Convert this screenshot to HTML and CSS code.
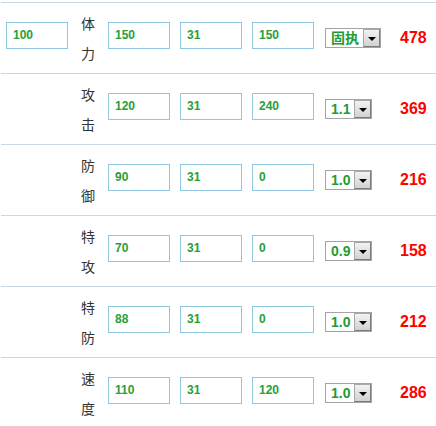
FILE: index.html
```html
<!DOCTYPE html>
<html lang="zh-CN">
<head>
    <meta charset="UTF-8">
    <meta name="viewport" content="width=device-width, initial-scale=1.0">
    <title>能力值计算</title>
    <link rel="stylesheet" href="styles.css">
</head>
<body>
    <div class="stats">
        <div class="row">
            <div class="lead"><input class="box" type="text" value="100"></div>
            <div class="name"><span>体</span><span>力</span></div>
            <input class="box" type="text" value="150">
            <input class="box" type="text" value="31">
            <input class="box" type="text" value="150">
            <div class="cell"><div class="pick"><span class="pick-text">固执</span><span class="pick-btn"></span></div></div>
            <div class="total">478</div>
        </div>
        <div class="row">
            <div class="lead"></div>
            <div class="name"><span>攻</span><span>击</span></div>
            <input class="box" type="text" value="120">
            <input class="box" type="text" value="31">
            <input class="box" type="text" value="240">
            <div class="cell"><div class="pick"><span class="pick-text">1.1</span><span class="pick-btn"></span></div></div>
            <div class="total">369</div>
        </div>
        <div class="row">
            <div class="lead"></div>
            <div class="name"><span>防</span><span>御</span></div>
            <input class="box" type="text" value="90">
            <input class="box" type="text" value="31">
            <input class="box" type="text" value="0">
            <div class="cell"><div class="pick"><span class="pick-text">1.0</span><span class="pick-btn"></span></div></div>
            <div class="total">216</div>
        </div>
        <div class="row">
            <div class="lead"></div>
            <div class="name"><span>特</span><span>攻</span></div>
            <input class="box" type="text" value="70">
            <input class="box" type="text" value="31">
            <input class="box" type="text" value="0">
            <div class="cell"><div class="pick"><span class="pick-text">0.9</span><span class="pick-btn"></span></div></div>
            <div class="total">158</div>
        </div>
        <div class="row">
            <div class="lead"></div>
            <div class="name"><span>特</span><span>防</span></div>
            <input class="box" type="text" value="88">
            <input class="box" type="text" value="31">
            <input class="box" type="text" value="0">
            <div class="cell"><div class="pick"><span class="pick-text">1.0</span><span class="pick-btn"></span></div></div>
            <div class="total">212</div>
        </div>
        <div class="row">
            <div class="lead"></div>
            <div class="name"><span>速</span><span>度</span></div>
            <input class="box" type="text" value="110">
            <input class="box" type="text" value="31">
            <input class="box" type="text" value="120">
            <div class="cell"><div class="pick"><span class="pick-text">1.0</span><span class="pick-btn"></span></div></div>
            <div class="total">286</div>
        </div>
    </div>
</body>
</html>
```
FILE: styles.css
```css
body {
    margin: 0;
    background: #fff;
    font-family: "Liberation Sans", Arial, "Noto Sans CJK SC", sans-serif;
}
.stats {
    margin: 2px 0 0 1px;
    border-top: 1px solid #c6d9e6;
}
.row {
    display: flex;
    align-items: center;
    height: 70px;
    padding-left: 5px;
    border-bottom: 1px solid #c6d9e6;
}
.lead {
    width: 62px;
    display: flex;
    align-items: center;
}
.lead .box {
    margin-right: 0;
}
.name {
    width: 40px;
    text-align: center;
    font-family: "Noto Sans CJK SC", sans-serif;
    font-size: 14px;
    line-height: 30px;
    color: #333;
}
.name span {
    display: block;
}
.box {
    box-sizing: border-box;
    width: 62px;
    height: 27px;
    margin: 0 10px 5px 0;
    padding: 0 0 2px 6px;
    border: 1px solid #8fc7e0;
    outline: none;
    font-family: "Liberation Sans", Arial, sans-serif;
    font-size: 12px;
    font-weight: bold;
    color: #26a03a;
    background: #fff;
}
.row > .box:nth-of-type(3) {
    margin-right: 0;
}
.cell {
    width: 75px;
    margin-left: 11px;
}
.pick {
    display: inline-flex;
    align-items: center;
    height: 20px;
    box-sizing: border-box;
    border: 1px solid #a4a4a4;
    background: #fff;
}
.pick-text {
    padding: 0 4px 0 5px;
    font-size: 14px;
    font-weight: bold;
    line-height: 18px;
    color: #1f9c34;
}
.pick-btn {
    box-sizing: border-box;
    width: 17px;
    height: 18px;
    border: 1px solid #7c7c7c;
    border-top-color: #a8a8a8;
    border-left-color: #a8a8a8;
    background: linear-gradient(#f2f2f2, #d2d2d2);
    display: flex;
    align-items: center;
    justify-content: center;
}
.pick-btn::after {
    content: "";
    border-left: 4px solid transparent;
    border-right: 4px solid transparent;
    border-top: 4px solid #000;
    margin-top: 1px;
}
.total {
    font-size: 16px;
    font-weight: bold;
    color: #ff0000;
}
```
